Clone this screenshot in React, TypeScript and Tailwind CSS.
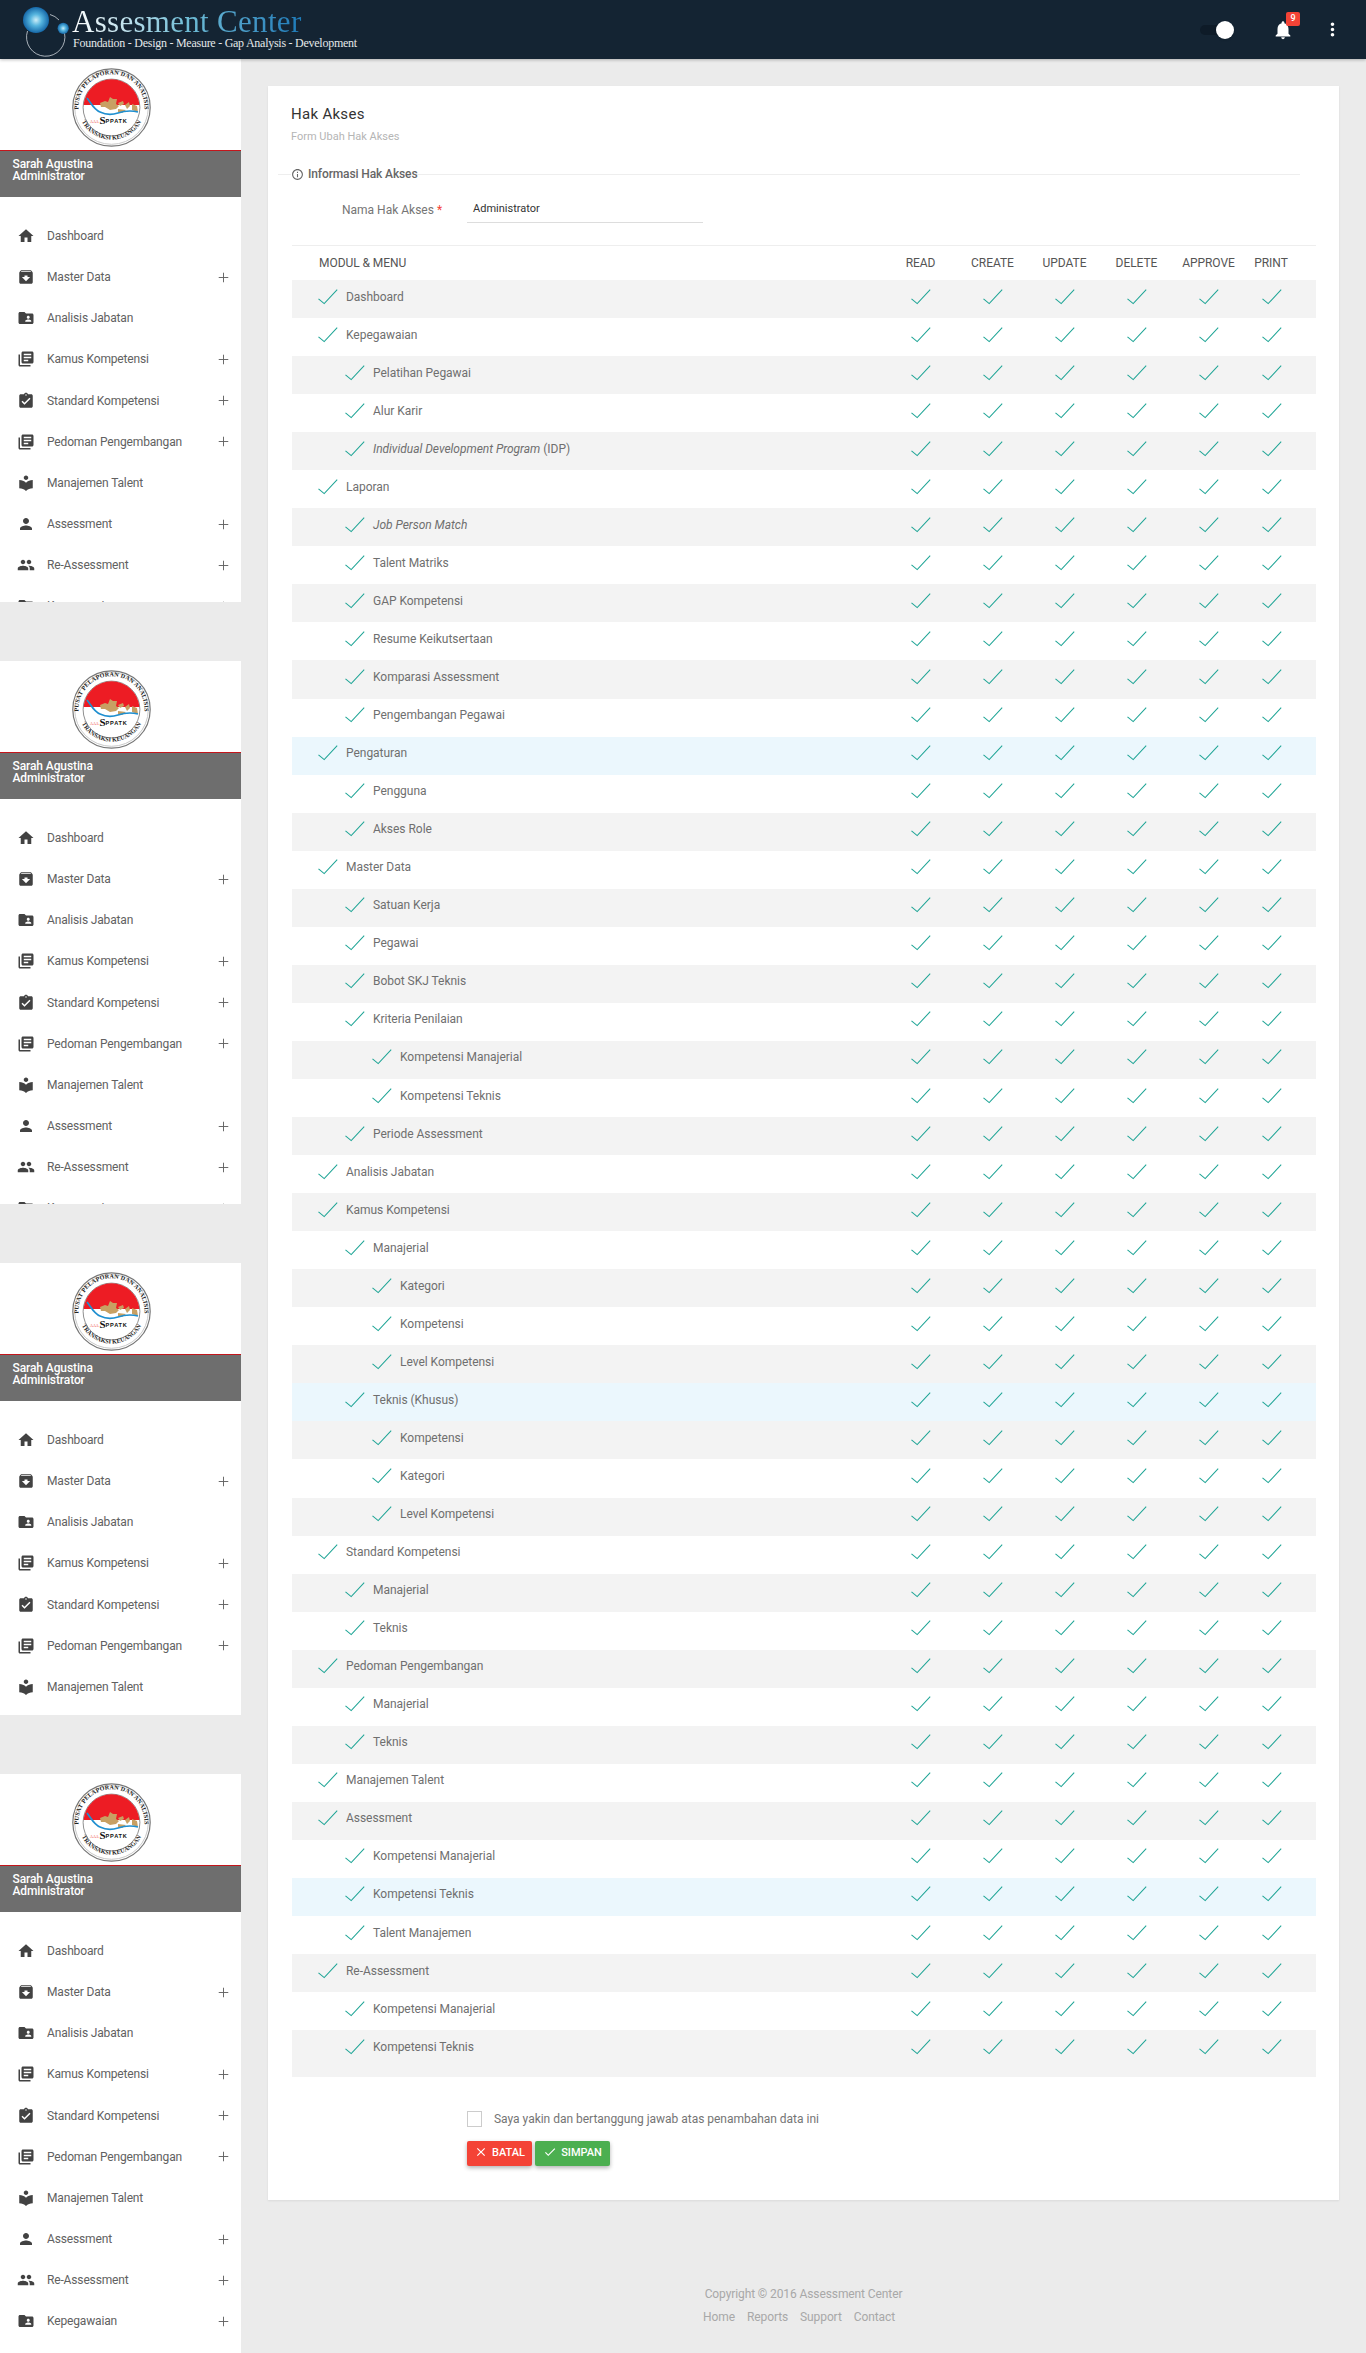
import { Plus } from "lucide-react";
import {
  MdArchive,
  MdAssignmentTurnedIn,
  MdClose,
  MdCheck,
  MdFolderShared,
  MdHome,
  MdInfoOutline,
  MdLibraryBooks,
  MdLocalLibrary,
  MdMoreVert,
  MdNotifications,
  MdPeople,
  MdPerson,
} from "react-icons/md";
import type { ReactNode } from "react";

const menu = [
  { label: "Dashboard", icon: MdHome, plus: false },
  { label: "Master Data", icon: MdArchive, plus: true },
  { label: "Analisis Jabatan", icon: MdFolderShared, plus: false },
  { label: "Kamus Kompetensi", icon: MdLibraryBooks, plus: true },
  { label: "Standard Kompetensi", icon: MdAssignmentTurnedIn, plus: true },
  { label: "Pedoman Pengembangan", icon: MdLibraryBooks, plus: true },
  { label: "Manajemen Talent", icon: MdLocalLibrary, plus: false },
  { label: "Assessment", icon: MdPerson, plus: true },
  { label: "Re-Assessment", icon: MdPeople, plus: true },
  { label: "Kepegawaian", icon: MdFolderShared, plus: true },
];

type Row = { level: number; label: ReactNode; blue?: boolean };

const rows: Row[] = [
  { level: 0, label: "Dashboard" },
  { level: 0, label: "Kepegawaian" },
  { level: 1, label: "Pelatihan Pegawai" },
  { level: 1, label: "Alur Karir" },
  {
    level: 1,
    label: (
      <>
        <em>Individual Development Program</em> (IDP)
      </>
    ),
  },
  { level: 0, label: "Laporan" },
  { level: 1, label: <em>Job Person Match</em> },
  { level: 1, label: "Talent Matriks" },
  { level: 1, label: "GAP Kompetensi" },
  { level: 1, label: "Resume Keikutsertaan" },
  { level: 1, label: "Komparasi Assessment" },
  { level: 1, label: "Pengembangan Pegawai" },
  { level: 0, label: "Pengaturan", blue: true },
  { level: 1, label: "Pengguna" },
  { level: 1, label: "Akses Role" },
  { level: 0, label: "Master Data" },
  { level: 1, label: "Satuan Kerja" },
  { level: 1, label: "Pegawai" },
  { level: 1, label: "Bobot SKJ Teknis" },
  { level: 1, label: "Kriteria Penilaian" },
  { level: 2, label: "Kompetensi Manajerial" },
  { level: 2, label: "Kompetensi Teknis" },
  { level: 1, label: "Periode Assessment" },
  { level: 0, label: "Analisis Jabatan" },
  { level: 0, label: "Kamus Kompetensi" },
  { level: 1, label: "Manajerial" },
  { level: 2, label: "Kategori" },
  { level: 2, label: "Kompetensi" },
  { level: 2, label: "Level Kompetensi" },
  { level: 1, label: "Teknis (Khusus)", blue: true },
  { level: 2, label: "Kompetensi" },
  { level: 2, label: "Kategori" },
  { level: 2, label: "Level Kompetensi" },
  { level: 0, label: "Standard Kompetensi" },
  { level: 1, label: "Manajerial" },
  { level: 1, label: "Teknis" },
  { level: 0, label: "Pedoman Pengembangan" },
  { level: 1, label: "Manajerial" },
  { level: 1, label: "Teknis" },
  { level: 0, label: "Manajemen Talent" },
  { level: 0, label: "Assessment" },
  { level: 1, label: "Kompetensi Manajerial" },
  { level: 1, label: "Kompetensi Teknis", blue: true },
  { level: 1, label: "Talent Manajemen" },
  { level: 0, label: "Re-Assessment" },
  { level: 1, label: "Kompetensi Manajerial" },
  { level: 1, label: "Kompetensi Teknis" },
];

const columns = ["READ", "CREATE", "UPDATE", "DELETE", "APPROVE", "PRINT"];

function Tick() {
  return (
    <svg width="20" height="16" viewBox="0 0 20 16" fill="none" className="shrink-0">
      <path d="M0.5 9.8 L6.2 14.6 L19.2 0.6" stroke="#1fa596" strokeWidth="1.05" />
    </svg>
  );
}

function Seal() {
  return (
    <svg width="79" height="79" viewBox="0 0 79 79">
      <defs>
        <path id="sealTop" d="M7.2 46 A33 33 0 1 1 71.8 46" />
        <path id="sealBottom" d="M9 52 A33.5 33.5 0 0 0 70 52" />
      </defs>
      <circle cx="39.5" cy="39.5" r="38.7" fill="#fff" stroke="#777" strokeWidth="1.2" />
      <circle cx="39.5" cy="39.5" r="36.8" fill="none" stroke="#bbb" strokeWidth="0.8" />
      <circle cx="39.5" cy="39.5" r="28.4" fill="#fff" stroke="#444" strokeWidth="0.6" />
      <path d="M11.6 37 A28 28 0 0 1 67.4 37 Z" fill="#ed1c24" />
      <text fontFamily="'Liberation Serif', serif" fontSize="6.1" fontWeight="700" fill="#222" letterSpacing="0.15">
        <textPath href="#sealTop" startOffset="50%" textAnchor="middle">
          PUSAT PELAPORAN DAN ANALISIS
        </textPath>
      </text>
      <text fontFamily="'Liberation Serif', serif" fontSize="6.1" fontWeight="700" fill="#222">
        <textPath href="#sealBottom" startOffset="50%" textAnchor="middle">
          TRANSAKSI KEUANGAN
        </textPath>
      </text>
      <path d="M28 35 L33 33 L36 34 L38 29 L41 31 L45 31 L44 36 L47 38 L44 41 L38 42 L33 39 L29 39 Z" fill="#c8a063" />
      <path d="M46 35 L51 33 L52 36 L48 38 Z M53 37 L57 34 L58 38 L55 41 Z M60 36 L65 38 L66 44 L60 42 Z M46 41 L54 42 L50 45 L46 44 Z" fill="#c8a063" />
      <path d="M15 30 C19 35 22 42 28 44 C34 47 40 47 46 45 C52 43 58 42 66 44" fill="none" stroke="#1f8fd0" strokeWidth="1.7" />
      <text x="33.5" y="54.5" fontFamily="'Liberation Sans', sans-serif" fontWeight="700" fontSize="5.6" letterSpacing="0.8" fill="#111">
        PPATK
      </text>
      <text x="27.5" y="55.5" fontFamily="'Liberation Serif', serif" fontWeight="700" fontSize="11" fill="#111">
        S
      </text>
      <text x="18" y="55" fontFamily="'Liberation Serif', serif" fontSize="4" fill="#e33">
        AAA
      </text>
    </svg>
  );
}

function Brand() {
  return (
    <div className="relative h-[59px] w-[370px] shrink-0">
      <svg width="76" height="59" viewBox="0 0 76 59" className="absolute top-0 left-0">
        <defs>
          <radialGradient id="ballA" cx="50%" cy="50%" r="50%">
            <stop offset="0%" stopColor="#cdeef8" />
            <stop offset="45%" stopColor="#55b4de" />
            <stop offset="100%" stopColor="#1668a8" />
          </radialGradient>
        </defs>
        <path d="M27.5 31 A19.2 19.2 0 1 0 64.5 33" fill="none" stroke="#cfd6dc" strokeWidth="0.8" />
        <path d="M50 14.5 A19.2 19.2 0 0 1 59 20" fill="none" stroke="#cfd6dc" strokeWidth="0.8" />
        <circle cx="36" cy="20" r="13" fill="url(#ballA)" />
        <circle cx="63.2" cy="28.3" r="5.6" fill="url(#ballA)" />
      </svg>
      <div className="absolute top-[0px] left-[72px] bg-gradient-to-r from-white via-[#6fbdd6] to-[#1c7ab8] bg-clip-text font-['Liberation_Serif',serif] text-[31px] leading-[44px] tracking-[0.3px] whitespace-nowrap text-transparent">
        Assesment Center
      </div>
      <div className="absolute top-[35px] left-[73px] font-['Liberation_Serif',serif] text-[12px] leading-[16px] tracking-[-0.26px] whitespace-nowrap text-[#e4e8ea]">
        Foundation - Design - Measure - Gap Analysis - Development
      </div>
    </div>
  );
}

function SidePanel({ height }: { height: string }) {
  return (
    <div className={`overflow-hidden bg-white ${height}`}>
      <div className="flex h-[91px] justify-center pt-[9px] pr-[19px]">
        <Seal />
      </div>
      <div className="h-[47px] border-t border-[#c4161c] bg-[#6e6e6e] px-[12.5px] pt-[7px] text-[12px] leading-[12px] font-medium tracking-[-0.1px] text-white">
        <div>Sarah Agustina</div>
        <div>Administrator</div>
      </div>
      <ul className="mt-[18.5px]">
        {menu.map((item) => (
          <li key={item.label} className="flex h-[41.15px] items-center text-[12px] tracking-[-0.15px] text-[#616161]">
            <span className="flex w-[47px] justify-center pl-[5px]">
              <item.icon size={18} className="text-[#424242]" />
            </span>
            <span className="flex-1">{item.label}</span>
            {item.plus && <Plus size={15} strokeWidth={1.5} className="mr-[10px] text-[#616161]" />}
          </li>
        ))}
      </ul>
    </div>
  );
}

function PermissionRow({ row, index }: { row: Row; index: number }) {
  const last = index === rows.length - 1;
  const bg = row.blue ? "bg-[#ebf7fd]" : index % 2 === 0 ? "bg-[#f3f3f3]" : "bg-white";
  const indent = row.level === 0 ? "pl-[26px]" : row.level === 1 ? "pl-[53px]" : "pl-[80px]";
  return (
    <div className={`${bg} ${last ? "pb-[9px]" : ""}`}>
      <div className="grid h-[38.05px] grid-cols-[593px_repeat(5,72px)_53px] items-center pb-[5px] text-[12px] tracking-[-0.03px] text-[#6f6f6f]">
        <div className={`flex items-center gap-[8px] ${indent}`}>
          <Tick />
          <span className="whitespace-nowrap">{row.label}</span>
        </div>
        {columns.map((c) => (
          <div key={c} className="flex justify-center">
            <Tick />
          </div>
        ))}
      </div>
    </div>
  );
}

export default function App() {
  return (
    <div className="h-[2353px] overflow-hidden bg-[#ebebeb] font-['Roboto',sans-serif]">
      <header className="relative flex h-[59px] items-center justify-between bg-[#142433] pr-[23px] shadow-[0_1px_3px_rgba(0,0,0,0.25)]">
        <Brand />
        <div className="flex items-center">
          <div className="relative h-[10px] w-[30px] rounded-full bg-[#0e1b28]">
            <div className="absolute top-[-4px] right-[-4px] h-[18px] w-[18px] rounded-full bg-white shadow" />
          </div>
          <div className="relative ml-[42px]">
            <MdNotifications size={22} className="text-white" />
            <span className="absolute top-[-7px] left-[14px] flex h-[14px] w-[14px] items-center justify-center rounded-[2px] bg-[#f44336] text-[9px] font-medium text-white">
              9
            </span>
          </div>
          <MdMoreVert size={21} className="ml-[28px] text-white" />
        </div>
      </header>

      <div className="flex">
        <aside className="flex w-[241px] shrink-0 flex-col gap-[59px]">
          <SidePanel height="h-[543px]" />
          <SidePanel height="h-[543px]" />
          <SidePanel height="h-[452px]" />
          <SidePanel height="h-[579px]" />
        </aside>

        <main className="min-w-0 flex-1 px-[27px] pt-[27px]">
          <section className="bg-white pr-[23px] pb-[34px] pl-[24px] shadow-[0_1px_2px_rgba(0,0,0,0.08)]">
            <h1 className="-ml-[1px] pt-[18px] text-[15px] leading-[20px] tracking-[0.3px] text-[#333]">Hak Akses</h1>
            <p className="mt-[5.5px] -ml-[1px] text-[11px] leading-[14px] text-[#b5b5b5]">Form Ubah Hak Akses</p>

            <div className="mt-[22.5px] -ml-[14px] flex w-[1022px] items-center">
              <div className="h-px w-[13px] bg-[#eeeeee]" />
              <div className="flex items-center gap-[4px] bg-white text-[12px] leading-[16px] font-medium tracking-[-0.12px] text-[#666]">
                <MdInfoOutline size={13} />
                <span>Informasi Hak Akses</span>
              </div>
              <div className="h-px flex-1 bg-[#eeeeee]" />
            </div>

            <div className="mt-[13px] flex h-[28px] items-center">
              <label className="w-[175px] pt-[1px] pl-[50px] text-[12px] whitespace-nowrap text-[#757575]">
                Nama Hak Akses <span className="text-[#f44336]">*</span>
              </label>
              <div className="flex h-[28px] w-[236px] items-center border-b border-[#dddddd] pt-[1px] pl-[6px] text-[11px] text-[#333]">
                Administrator
              </div>
            </div>

            <div className="mt-[22px] grid h-[35px] grid-cols-[593px_repeat(5,72px)_53px] items-center border-t border-[#eeeeee] text-[12px] tracking-[-0.05px] text-[#555]">
              <div className="pl-[27px]">MODUL &amp; MENU</div>
              {columns.map((c) => (
                <div key={c} className="pr-[1px] text-center">
                  {c}
                </div>
              ))}
            </div>

            {rows.map((row, i) => (
              <PermissionRow key={i} row={row} index={i} />
            ))}

            <div className="mt-[34px] ml-[175px] flex h-[16px] items-center gap-[12px] text-[12px] tracking-[-0.02px] text-[#757575]">
              <span className="h-[16px] w-[15px] border border-[#cccccc] bg-white" />
              <span>Saya yakin dan bertanggung jawab atas penambahan data ini</span>
            </div>
            <div className="mt-[14px] ml-[175px] flex gap-[3px]">
              <button className="flex h-[25px] w-[65px] items-center justify-center gap-[4px] rounded-[2px] bg-[#f44336] text-[11px] font-medium text-white shadow-[0_2px_4px_rgba(0,0,0,0.3)]">
                <MdClose size={14} className="-mt-[3px]" />
                BATAL
              </button>
              <button className="flex h-[25px] w-[75px] items-center justify-center gap-[4px] rounded-[2px] bg-[#4caf50] text-[11px] font-medium text-white shadow-[0_2px_4px_rgba(0,0,0,0.3)]">
                <MdCheck size={14} className="-mt-[3px]" />
                SIMPAN
              </button>
            </div>
          </section>

          <footer className="mt-[86px] text-center text-[12px] tracking-[-0.1px] text-[#a8a8a8]">
            <p className="leading-[16px]">Copyright © 2016 Assessment Center</p>
            <nav className="mt-[7px] flex justify-center gap-[12px] pr-[9px] leading-[16px]">
              <span>Home</span>
              <span>Reports</span>
              <span>Support</span>
              <span>Contact</span>
            </nav>
          </footer>
        </main>
      </div>
    </div>
  );
}
